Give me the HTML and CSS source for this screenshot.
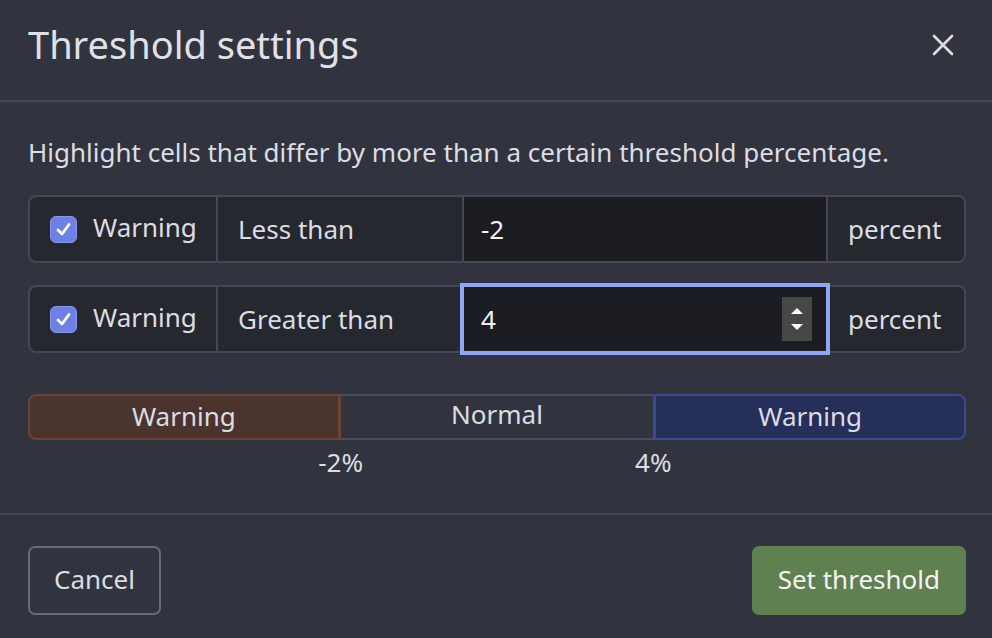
FILE: index.html
```html
<!DOCTYPE html>
<html lang="en">
<head>
  <meta charset="UTF-8">
  <meta name="viewport" content="width=device-width, initial-scale=1.0">
  <title>Threshold settings</title>
  <link rel="stylesheet" href="styles.css">
</head>
<body>
  <div class="modal">
    <div class="modal-header">
      <h1 class="modal-title">Threshold settings</h1>
      <button class="btn-close" aria-label="Close">
        <svg width="22" height="22" viewBox="0 0 22 22">
          <path d="M2 2 L20 20 M20 2 L2 20" stroke="#dcdde3" stroke-width="2.6" stroke-linecap="round"/>
        </svg>
      </button>
    </div>

    <div class="modal-body">
      <p class="intro">Highlight cells that differ by more than a certain threshold percentage.</p>

      <div class="input-group">
        <label class="cell cell-check">
          <span class="checkbox">
            <svg width="17" height="17" viewBox="0 0 17 17"><path d="M3 9 L7 13 L14 3.5" fill="none" stroke="#fff" stroke-width="2.8" stroke-linecap="round" stroke-linejoin="round"/></svg>
          </span>
          Warning
        </label>
        <span class="cell cell-op">Less than</span>
        <div class="field">-2</div>
        <span class="cell cell-unit">percent</span>
      </div>

      <div class="input-group">
        <label class="cell cell-check">
          <span class="checkbox">
            <svg width="17" height="17" viewBox="0 0 17 17"><path d="M3 9 L7 13 L14 3.5" fill="none" stroke="#fff" stroke-width="2.8" stroke-linecap="round" stroke-linejoin="round"/></svg>
          </span>
          Warning
        </label>
        <span class="cell cell-op">Greater than</span>
        <div class="field focused">
          4
          <span class="spinner">
            <svg width="14" height="30" viewBox="0 0 14 30">
              <path d="M7 4 L13 10 L1 10 Z" fill="#fff"/>
              <path d="M1 20 L13 20 L7 26 Z" fill="#fff"/>
            </svg>
          </span>
        </div>
        <span class="cell cell-unit">percent</span>
      </div>

      <div class="scale">
        <div class="band band-low">Warning</div>
        <div class="band band-normal">Normal</div>
        <div class="band band-high">Warning</div>
      </div>
      <div class="scale-labels">
        <span>-2%</span>
        <span>4%</span>
      </div>
    </div>

    <div class="modal-footer">
      <button class="btn btn-outline">Cancel</button>
      <button class="btn btn-success">Set threshold</button>
    </div>
  </div>
</body>
</html>
```

FILE: styles.css
```css
* {
  box-sizing: border-box;
}

body {
  margin: 0;
  background: #31343e;
  color: #dcdde3;
  font-family: "Noto Sans", "Open Sans", sans-serif;
  font-size: 26px;
}

.modal {
  width: 992px;
  height: 638px;
  overflow: hidden;
}

.modal-header {
  height: 102px;
  display: flex;
  align-items: center;
  justify-content: space-between;
  padding: 0 38px 0 28px;
  border-bottom: 2px solid #444656;
}

.modal-title {
  margin: 0 0 12px 0;
  font-size: 38px;
  font-weight: 400;
  color: #e0e1e7;
}

.btn-close {
  background: none;
  border: none;
  padding: 0;
  margin: 0 0 10px 0;
  display: flex;
}

.modal-body {
  padding: 31px 26px 0 28px;
  height: 413px;
  border-bottom: 2px solid #444656;
}

.intro {
  margin: 0 0 24px 0;
  line-height: 38px;
}

.input-group {
  display: flex;
  height: 68px;
  margin-bottom: 22px;
}

.input-group > * {
  border: 2px solid #454756;
  margin-left: -2px;
  display: flex;
  align-items: center;
}

.input-group > :first-child {
  margin-left: 0;
  border-radius: 8px 0 0 8px;
}

.input-group > :last-child {
  border-radius: 0 8px 8px 0;
}

.cell {
  background: #26282f;
  color: #dcdde3;
}

.cell-check {
  width: 190px;
  padding: 0 0 4px 20px;
  gap: 16px;
}

.cell-op {
  width: 248px;
  padding-left: 20px;
}

.cell-unit {
  width: 140px;
  padding-left: 20px;
}

.checkbox {
  width: 27px;
  height: 27px;
  border-radius: 6px;
  background: #6c80e6;
  border: 1px solid #8797ea;
  display: flex;
  align-items: center;
  justify-content: center;
  margin-top: 4px;
}

.field {
  flex: 1;
  background: #1c1d22;
  color: #f2f2f4;
  padding: 0 14px 0 17px;
  justify-content: space-between;
}

.field.focused {
  border-color: #8fa5f8;
  box-shadow: 0 0 0 2px #8fa5f8;
  position: relative;
  z-index: 1;
}

.spinner {
  width: 30px;
  height: 44px;
  background: #474747;
  display: flex;
  align-items: center;
  justify-content: center;
}

.scale {
  display: grid;
  grid-template-columns: 1fr 1fr 1fr;
  height: 46px;
  margin-top: 41px;
}

.band {
  display: flex;
  align-items: center;
  justify-content: center;
  border: 2px solid;
  color: #dcdde3;
  padding-bottom: 2px;
}

.band-low {
  background: #4a342d;
  border-color: #6d4431;
  border-radius: 8px 0 0 8px;
  border-right-width: 3px;
}

.band-normal {
  background: #31343e;
  border-color: #4a4d62;
  border-left: none;
  border-right: none;
  padding-bottom: 6px;
}

.band-high {
  background: #262e5a;
  border-color: #3a4a91;
  border-radius: 0 8px 8px 0;
  border-left-width: 3px;
}

.scale-labels {
  display: grid;
  grid-template-columns: 1fr 1fr 1fr;
  line-height: 44px;
}

.scale-labels span {
  justify-self: end;
  transform: translateX(50%);
}

.modal-footer {
  display: flex;
  justify-content: space-between;
  padding: 31px 26px 0 28px;
}

.btn {
  height: 69px;
  font-family: inherit;
  font-size: 26px;
  border-radius: 7px;
  padding: 0 24px 3px;
  cursor: pointer;
}

.btn-outline {
  background: transparent;
  color: #dcdde3;
  border: 2px solid #666880;
}

.btn-success {
  background: #5f8050;
  color: #f4f4f4;
  border: none;
  padding: 0 26px 3px;
}
```
